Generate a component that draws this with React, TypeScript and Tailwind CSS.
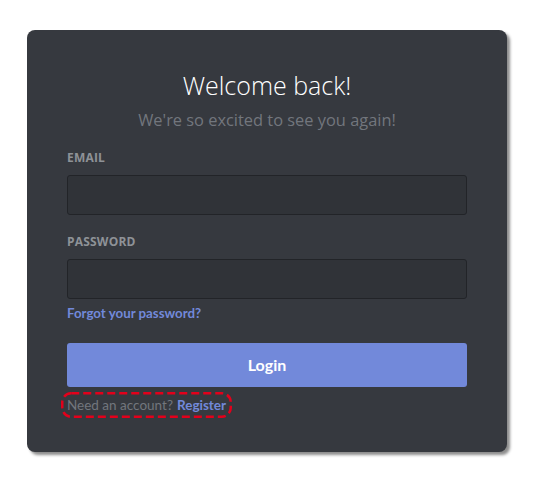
export default function App() {
  const lato = { fontFamily: 'Lato, "Open Sans", sans-serif' };
  return (
    <div className="min-h-[486px] w-[536px] bg-white pt-[30px] pl-[27px]" style={{ fontFamily: '"Open Sans", "Noto Sans", sans-serif' }}>
      <div className="w-[480px] rounded-[8px] bg-[#36393f] px-[40px] pt-[40px] pb-[34px] shadow-[3px_3px_3px_rgba(0,0,0,0.45)]">
        <h1 className="text-center text-[25px] leading-[30px] font-light text-white">Welcome back!</h1>
        <p className="mt-[10px] text-center text-[16.4px] leading-[20px] text-[#72767d]">We're so excited to see you again!</p>
        <div className="mt-[20px] text-[12px] leading-[16px] font-bold tracking-[0.2px] text-[#8e9297]">EMAIL</div>
        <div className="mt-[9px] h-[40px] w-[400px] rounded-[3px] border border-[#222428] bg-[#303338]" />
        <div className="mt-[19px] text-[12px] leading-[16px] font-bold tracking-[0.2px] text-[#8e9297]">PASSWORD</div>
        <div className="mt-[9px] h-[40px] w-[400px] rounded-[3px] border border-[#222428] bg-[#303338]" />
        <div className="mt-[4px] text-[13.3px] leading-[20px] font-bold text-[#7289da]" style={lato}>Forgot your password?</div>
        <button className="mt-[20px] flex h-[44px] w-[400px] items-center justify-center rounded-[3px] bg-[#7289da] text-[16px] font-bold text-white" style={lato}>Login</button>
        <div className="relative mt-[5px] -ml-[6px] flex h-[26px] w-[171px] items-center pl-[6px] text-[13.5px] leading-[20px]" style={lato}>
          <span className="text-[#72767d]">Need an account?</span>
          <span className="ml-[4px] font-bold text-[#7289da]">Register</span>
          <svg className="pointer-events-none absolute inset-0" width="171" height="26" viewBox="0 0 171 26">
            <rect x="1.25" y="1.25" width="168.5" height="23.5" rx="9" ry="9" fill="none" stroke="#e3001b" strokeWidth="2.5" strokeDasharray="8 4" />
          </svg>
        </div>
      </div>
    </div>
  );
}
